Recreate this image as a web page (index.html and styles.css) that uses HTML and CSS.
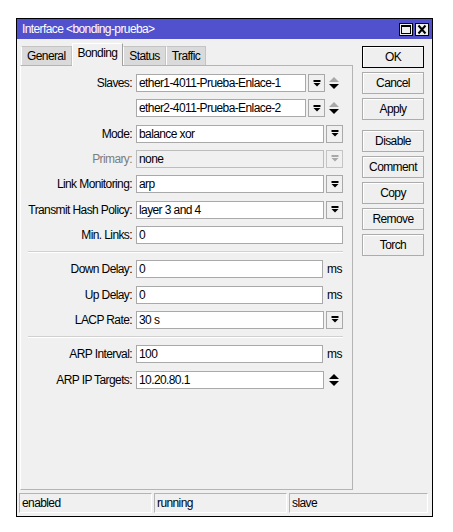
FILE: index.html
```html
<!DOCTYPE html>
<html lang="es">
<head>
    <meta charset="UTF-8">
    <title>Interface &lt;bonding-prueba&gt;</title>
    <link rel="stylesheet" href="styles.css">
</head>
<body>
    <div class="window">
        <!-- barra de titulo -->
        <div class="titlebar">
            <span class="title">Interface &lt;bonding-prueba&gt;</span>
            <div class="title-btns">
                <span class="tbtn">
                    <svg width="12" height="11" viewBox="0 0 12 11"><rect x="1.5" y="1.5" width="9" height="8" fill="none" stroke="#000"/><rect x="1" y="1" width="10" height="2" fill="#000"/></svg>
                </span>
                <span class="tbtn">
                    <svg width="12" height="11" viewBox="0 0 12 11"><path d="M2.5 1.5 L9.5 9.5 M9.5 1.5 L2.5 9.5" stroke="#000" stroke-width="2"/></svg>
                </span>
            </div>
        </div>

        <div class="main">
            <div class="left">
                <div class="tabs">
                    <div class="tab">General</div>
                    <div class="tab active">Bonding</div>
                    <div class="tab">Status</div>
                    <div class="tab">Traffic</div>
                </div>

                <div class="panel">
                    <div class="row">
                        <div class="label">Slaves:</div>
                        <div class="control">
                            <div class="input">ether1-4011-Prueba-Enlace-1</div>
                            <div class="drop"><svg width="8" height="7" viewBox="0 0 8 7"><rect x="0.5" y="0" width="7" height="2" fill="#000"/><polygon points="0.5,3 7.5,3 4,6.5" fill="#000"/></svg></div>
                            <div class="spin"><svg width="10" height="12" viewBox="0 0 10 12"><polygon points="0,5 10,5 5,0" fill="#a8a8a8"/><polygon points="0,7 10,7 5,12" fill="#000"/></svg></div>
                        </div>
                    </div>
                    <div class="row">
                        <div class="label"></div>
                        <div class="control">
                            <div class="input">ether2-4011-Prueba-Enlace-2</div>
                            <div class="drop"><svg width="8" height="7" viewBox="0 0 8 7"><rect x="0.5" y="0" width="7" height="2" fill="#000"/><polygon points="0.5,3 7.5,3 4,6.5" fill="#000"/></svg></div>
                            <div class="spin"><svg width="10" height="12" viewBox="0 0 10 12"><polygon points="0,5 10,5 5,0" fill="#a8a8a8"/><polygon points="0,7 10,7 5,12" fill="#000"/></svg></div>
                        </div>
                    </div>
                    <div class="row">
                        <div class="label">Mode:</div>
                        <div class="control">
                            <div class="input">balance xor</div>
                            <div class="drop"><svg width="8" height="7" viewBox="0 0 8 7"><rect x="0.5" y="0" width="7" height="2" fill="#000"/><polygon points="0.5,3 7.5,3 4,6.5" fill="#000"/></svg></div>
                        </div>
                    </div>
                    <div class="row disabled">
                        <div class="label">Primary:</div>
                        <div class="control">
                            <div class="input">none</div>
                            <div class="drop"><svg width="8" height="7" viewBox="0 0 8 7"><rect x="0.5" y="0" width="7" height="2" fill="#a8a8a8"/><polygon points="0.5,3 7.5,3 4,6.5" fill="#a8a8a8"/></svg></div>
                        </div>
                    </div>
                    <div class="row">
                        <div class="label">Link Monitoring:</div>
                        <div class="control">
                            <div class="input">arp</div>
                            <div class="drop"><svg width="8" height="7" viewBox="0 0 8 7"><rect x="0.5" y="0" width="7" height="2" fill="#000"/><polygon points="0.5,3 7.5,3 4,6.5" fill="#000"/></svg></div>
                        </div>
                    </div>
                    <div class="row">
                        <div class="label">Transmit Hash Policy:</div>
                        <div class="control">
                            <div class="input">layer 3 and 4</div>
                            <div class="drop"><svg width="8" height="7" viewBox="0 0 8 7"><rect x="0.5" y="0" width="7" height="2" fill="#000"/><polygon points="0.5,3 7.5,3 4,6.5" fill="#000"/></svg></div>
                        </div>
                    </div>
                    <div class="row">
                        <div class="label">Min. Links:</div>
                        <div class="control">
                            <div class="input">0</div>
                        </div>
                    </div>

                    <div class="sep"></div>

                    <div class="row">
                        <div class="label">Down Delay:</div>
                        <div class="control">
                            <div class="input">0</div>
                            <div class="unit">ms</div>
                        </div>
                    </div>
                    <div class="row">
                        <div class="label">Up Delay:</div>
                        <div class="control">
                            <div class="input">0</div>
                            <div class="unit">ms</div>
                        </div>
                    </div>
                    <div class="row">
                        <div class="label">LACP Rate:</div>
                        <div class="control">
                            <div class="input">30 s</div>
                            <div class="drop"><svg width="8" height="7" viewBox="0 0 8 7"><rect x="0.5" y="0" width="7" height="2" fill="#000"/><polygon points="0.5,3 7.5,3 4,6.5" fill="#000"/></svg></div>
                        </div>
                    </div>

                    <div class="sep"></div>

                    <div class="row">
                        <div class="label">ARP Interval:</div>
                        <div class="control">
                            <div class="input">100</div>
                            <div class="unit">ms</div>
                        </div>
                    </div>
                    <div class="row">
                        <div class="label">ARP IP Targets:</div>
                        <div class="control">
                            <div class="input">10.20.80.1</div>
                            <div class="spin wide"><svg width="10" height="12" viewBox="0 0 10 12"><polygon points="0,5 10,5 5,0" fill="#000"/><polygon points="0,7 10,7 5,12" fill="#000"/></svg></div>
                        </div>
                    </div>
                </div>
            </div>

            <!-- botones de la derecha -->
            <div class="buttons">
                <div class="btn default">OK</div>
                <div class="btn">Cancel</div>
                <div class="btn">Apply</div>
                <div class="btn gap">Disable</div>
                <div class="btn">Comment</div>
                <div class="btn">Copy</div>
                <div class="btn">Remove</div>
                <div class="btn">Torch</div>
            </div>
        </div>

        <div class="statusbar">
            <div class="status s1">enabled</div>
            <div class="status s2">running</div>
            <div class="status s3">slave</div>
        </div>
    </div>
</body>
</html>
```

FILE: styles.css
```css
body {
    margin: 0;
    padding: 18px 0 0 16px;
    background-color: #fff;
    font-family: "Liberation Sans", Arial, sans-serif;
    font-size: 12px;
    letter-spacing: -0.6px;
    color: #000;
}

.window {
    width: 417px;
    box-sizing: border-box;
    border: 1px solid #000;
    background-color: #f0f0f0;
}

.titlebar {
    height: 20px;
    background-color: #5151cd;
    color: #fff;
    display: flex;
    align-items: center;
    justify-content: space-between;
    padding: 0 3px 0 5px;
}

.title-btns {
    display: flex;
    gap: 2px;
}

.tbtn {
    width: 14px;
    height: 13px;
    box-sizing: border-box;
    border: 1px solid #000;
    background-color: #f0f0f0;
    display: flex;
    align-items: center;
    justify-content: center;
}

.main {
    display: flex;
    padding: 4px 7px 0 3px;
}

.left {
    width: 333px;
}

.tabs {
    display: flex;
    align-items: flex-end;
    height: 22px;
    padding-left: 1px;
}

.tab {
    height: 19px;
    box-sizing: border-box;
    padding: 0 5px;
    line-height: 18px;
    background-color: #dadada;
    border: 1px solid #c4c4c4;
    border-left-color: #fff;
    border-bottom: none;
}

.tab.active {
    position: relative;
    height: 23px;
    margin-bottom: -1px;
    padding-bottom: 3px;
    background-color: #f0f0f0;
    border-color: #fff #a0a0a0 #f0f0f0 #fff;
}

.panel {
    height: 425px;
    box-sizing: border-box;
    border: 1px solid #b4b4b4;
    border-left-color: #fff;
    padding-top: 8px;
}

.row {
    display: flex;
    align-items: center;
    height: 18px;
    margin-bottom: 7.33px;
}

.label {
    width: 115px;
    box-sizing: border-box;
    padding-right: 4px;
    text-align: right;
    white-space: nowrap;
}

.control {
    width: 207px;
    height: 18px;
    display: flex;
    align-items: center;
}

.input {
    flex: 1;
    height: 18px;
    box-sizing: border-box;
    border: 1px solid #a9a9a9;
    background-color: #fff;
    padding: 0 2px;
    line-height: 16px;
    white-space: nowrap;
    overflow: hidden;
}

.drop {
    width: 17px;
    height: 18px;
    margin-left: 2px;
    box-sizing: border-box;
    border: 1px solid #a9a9a9;
    background-color: #f0f0f0;
    display: flex;
    align-items: center;
    justify-content: center;
}

.spin {
    width: 18px;
    display: flex;
    justify-content: center;
}

.spin.wide {
    width: 19px;
}

.unit {
    width: 20px;
    box-sizing: border-box;
    padding-left: 4px;
}

.disabled .label {
    color: #7d7d7d;
}

.disabled .input {
    background-color: #f0f0f0;
    border-color: #bcbcbc;
}

.disabled .drop {
    border-color: #c4c4c4;
}

.sep {
    border-top: 1px solid #d0d0d0;
    border-bottom: 1px solid #fff;
    margin: 1.5px 9px 7px 7px;
}

.buttons {
    width: 62px;
    margin: 3px 0 0 9px;
    display: flex;
    flex-direction: column;
    gap: 4px;
}

.btn {
    height: 22px;
    box-sizing: border-box;
    border: 1px solid #acacac;
    background-color: #efefef;
    box-shadow: inset 1px 1px #fff;
    text-align: center;
    line-height: 20px;
}

.btn.default {
    border-color: #000;
}

.btn.gap {
    margin-top: 6px;
}

.statusbar {
    display: flex;
    gap: 2px;
    padding: 3px 4px 3px 2px;
}

.status {
    height: 20px;
    box-sizing: border-box;
    border: 1px solid #b4b4b4;
    border-right-color: #fff;
    border-bottom-color: #fff;
    padding-left: 2px;
    line-height: 18px;
}

.s1, .s2 {
    width: 133px;
}

.s3 {
    flex: 1;
}
```
